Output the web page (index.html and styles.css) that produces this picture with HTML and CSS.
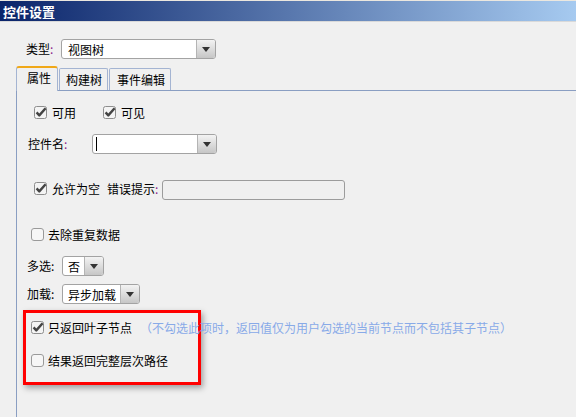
FILE: index.html
```html
<!DOCTYPE html>
<html lang="zh">
<head>
<meta charset="utf-8">
<title>控件设置</title>
<link rel="stylesheet" href="styles.css">
</head>
<body>
<div class="window">
  <div class="titlebar">控件设置</div>
  <div class="content">
    <div class="type-row">
      <span class="label lbl-type">类型<span class="colon">:</span></span>
      <div class="combo combo-type">
        <span class="combo-text">视图树</span>
        <span class="combo-btn"><svg width="8" height="5" viewBox="0 0 8 5"><path d="M0 0h8L4 5z" fill="#333"/></svg></span>
      </div>
    </div>
    <div class="tabs">
      <div class="tab tab-active">属性</div>
      <div class="tab tab-2">构建树</div>
      <div class="tab tab-3">事件编辑</div>
    </div>
    <div class="panel">
      <div class="row row-vis">
        <span class="check check-gap"><svg class="cb" width="13" height="13" viewBox="0 0 13 13"><rect x="0.5" y="0.5" width="12" height="12" rx="2" fill="#f4f4f4" stroke="#8e8e8e"/><path d="M2.6 6.4L5.3 9.4L11.6 2.2" fill="none" stroke="#444" stroke-width="2.4" stroke-linejoin="round"/></svg><span>可用</span></span>
        <span class="check check-gap check-second"><svg class="cb" width="13" height="13" viewBox="0 0 13 13"><rect x="0.5" y="0.5" width="12" height="12" rx="2" fill="#f4f4f4" stroke="#8e8e8e"/><path d="M2.6 6.4L5.3 9.4L11.6 2.2" fill="none" stroke="#444" stroke-width="2.4" stroke-linejoin="round"/></svg><span>可见</span></span>
      </div>
      <div class="row row-name">
        <span class="label lbl-name">控件名<span class="colon">:</span></span>
        <div class="combo combo-name">
          <span class="combo-text"><span class="caret"></span></span>
          <span class="combo-btn"><svg width="8" height="5" viewBox="0 0 8 5"><path d="M0 0h8L4 5z" fill="#333"/></svg></span>
        </div>
      </div>
      <div class="row row-empty">
        <span class="check check-gap"><svg class="cb" width="13" height="13" viewBox="0 0 13 13"><rect x="0.5" y="0.5" width="12" height="12" rx="2" fill="#f4f4f4" stroke="#8e8e8e"/><path d="M2.6 6.4L5.3 9.4L11.6 2.2" fill="none" stroke="#444" stroke-width="2.4" stroke-linejoin="round"/></svg><span>允许为空</span></span>
        <span class="label lbl-err">错误提示<span class="colon">:</span></span>
        <div class="textbox"></div>
      </div>
      <div class="row row-dedup">
        <span class="check"><svg class="cb" width="13" height="13" viewBox="0 0 13 13"><rect x="0.5" y="0.5" width="12" height="12" rx="2.5" fill="#f6f6f6" stroke="#9a9a9a"/></svg><span>去除重复数据</span></span>
      </div>
      <div class="row row-multi">
        <span class="label lbl-short">多选:</span>
        <div class="combo combo-multi">
          <span class="combo-text small">否</span>
          <span class="combo-btn"><svg width="8" height="5" viewBox="0 0 8 5"><path d="M0 0h8L4 5z" fill="#333"/></svg></span>
        </div>
      </div>
      <div class="row row-load">
        <span class="label lbl-short">加载:</span>
        <div class="combo combo-load">
          <span class="combo-text small">异步加载</span>
          <span class="combo-btn"><svg width="8" height="5" viewBox="0 0 8 5"><path d="M0 0h8L4 5z" fill="#333"/></svg></span>
        </div>
      </div>
      <div class="highlight">
        <div class="hl-row">
          <span class="check"><svg class="cb" width="13" height="13" viewBox="0 0 13 13"><rect x="0.5" y="0.5" width="12" height="12" rx="2" fill="#f4f4f4" stroke="#8e8e8e"/><path d="M2.6 6.4L5.3 9.4L11.6 2.2" fill="none" stroke="#444" stroke-width="2.4" stroke-linejoin="round"/></svg><span>只返回叶子节点</span></span>
          <span class="hint">（不勾选此项时，返回值仅为用户勾选的当前节点而不包括其子节点）</span>
        </div>
        <div class="hl-row hl-second">
          <span class="check"><svg class="cb" width="13" height="13" viewBox="0 0 13 13"><rect x="0.5" y="0.5" width="12" height="12" rx="2.5" fill="#f6f6f6" stroke="#9a9a9a"/></svg><span>结果返回完整层次路径</span></span>
        </div>
      </div>
    </div>
  </div>
</div>
</body>
</html>
```

FILE: styles.css
```css
* { box-sizing: border-box; }
html, body { margin: 0; padding: 0; }
body {
  width: 576px;
  height: 417px;
  overflow: hidden;
  background: #f0f0f0;
  font-family: "Noto Sans CJK SC", "Noto Sans", sans-serif;
  font-size: 12px;
  color: #000;
}
.window {
  height: 417px;
  display: flex;
  flex-direction: column;
  border-top: 1px solid #ebe7df;
}
.titlebar {
  flex: none;
  height: 21px;
  line-height: 21px;
  padding-left: 3px;
  background: linear-gradient(to right, #0a246a, #a6caf0);
  color: #fff;
  font-weight: bold;
  font-size: 13px;
  border-bottom: 1px solid #d9d9d9;
}
.content {
  flex: 1;
  min-height: 0;
  display: flex;
  flex-direction: column;
  padding-top: 17px;
}
.label { white-space: nowrap; flex: none; line-height: 16px; }
.colon { color: #8a1f8a; }
.type-row {
  display: flex;
  align-items: center;
  height: 20px;
  padding-left: 26px;
}
.lbl-type { width: 35px; }

.combo {
  display: flex;
  flex: none;
  height: 20px;
  background: #fff;
  border: 1px solid #a3a3a3;
  border-radius: 3px;
  overflow: hidden;
}
.combo-text {
  flex: 1;
  display: flex;
  align-items: center;
  padding-left: 6px;
  white-space: nowrap;
}
.combo-text.small { padding-left: 5px; }
.combo-btn {
  flex: none;
  width: 19px;
  display: flex;
  align-items: center;
  justify-content: center;
  border-left: 1px solid #b4b4b4;
  background: linear-gradient(#f3f3f3, #c6c6c6);
}
.combo-type { width: 155px; }
.combo-name { width: 125px; }
.combo-multi { width: 42px; }
.combo-load { width: 78px; }
.caret {
  display: block;
  width: 1px;
  height: 14px;
  margin-left: -3px;
  background: #000;
}

.tabs {
  flex: none;
  display: flex;
  align-items: flex-end;
  height: 24px;
  margin-top: 7px;
  padding-left: 16px;
  position: relative;
  z-index: 1;
}
.tab {
  flex: none;
  height: 22px;
  line-height: 18px;
  padding-top: 2px;
  border: 1px solid #a4b4d2;
  border-bottom: none;
  border-radius: 2px 2px 0 0;
  background: #f0f0f0;
  white-space: nowrap;
}
.tab-active {
  height: 25px;
  margin-bottom: -1px;
  width: 42px;
  padding-left: 10px;
  padding-top: 1px;
  line-height: 17px;
  border-top: 2px solid #f0a818;
  border-radius: 3px 3px 0 0;
}
.tab-2 { width: 49px; margin-left: 1px; padding-left: 6px; }
.tab-3 { width: 62px; margin-left: 1px; padding-left: 7px; }

.panel {
  flex: 1;
  min-height: 0;
  margin-left: 16px;
  border-top: 1px solid #8a9ec2;
  border-left: 1px solid #8a9ec2;
  display: flex;
  flex-direction: column;
}
.row {
  flex: none;
  display: flex;
  align-items: center;
  height: 20px;
}
.check {
  display: flex;
  align-items: center;
  white-space: nowrap;
  flex: none;
}
.cb { flex: none; margin-right: 4px; overflow: visible; }
.check-gap .cb { margin-right: 5px; }
.check-second { margin-left: 27px; }

.row-vis { margin-top: 11px; padding-left: 17px; }
.row-name { margin-top: 12px; padding-left: 11px; }
.lbl-name { width: 64px; }
.row-empty { margin-top: 26px; padding-left: 17px; }
.row-empty .check { margin-top: -4px; }
.lbl-err { margin-left: 7px; width: 55px; margin-top: -2px; }
.textbox {
  flex: none;
  width: 183px;
  height: 20px;
  border: 1px solid #9c9c9c;
  border-radius: 3px;
  background: #f0f0f0;
}
.row-dedup { margin-top: 24px; padding-left: 14px; }
.row-multi { margin-top: 12px; padding-left: 10px; }
.row-load { margin-top: 8px; padding-left: 10px; }
.lbl-short { width: 35px; }

.highlight {
  flex: none;
  width: 178px;
  height: 75px;
  margin-top: 6px;
  margin-left: 6px;
  padding-top: 4px;
  padding-left: 5px;
  border: 3px solid #ff0000;
  box-shadow: 2px 3px 6px rgba(0, 0, 0, 0.35);
  display: flex;
  flex-direction: column;
}
.hl-row {
  display: flex;
  align-items: center;
  height: 20px;
  white-space: nowrap;
}
.hl-second { margin-top: 13px; }
.hint {
  margin-left: 8px;
  color: #88aae8;
}
```
